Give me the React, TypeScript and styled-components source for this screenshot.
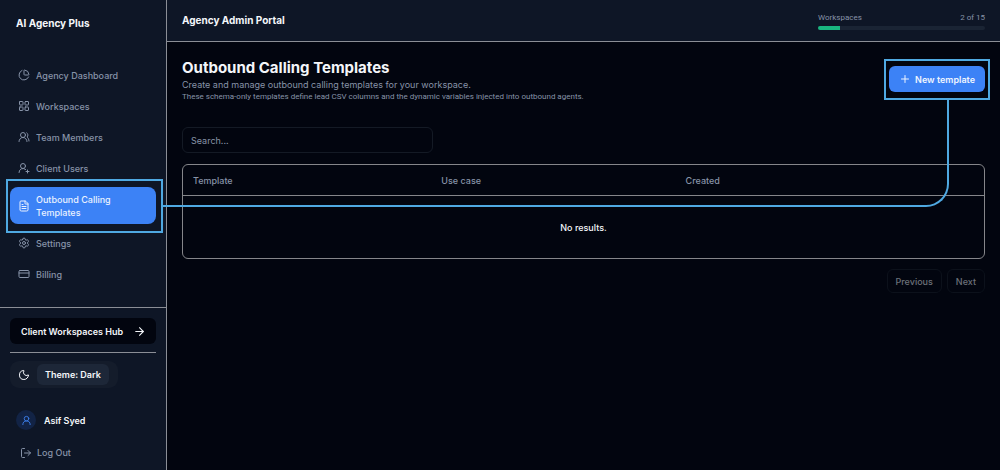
import React from "react";
import styled, { createGlobalStyle, css } from "styled-components";
import {
  ArrowRight,
  ChartPie,
  CreditCard,
  FileText,
  LayoutGrid,
  LogOut,
  Moon,
  Plus,
  Settings,
  UserRound,
  UserRoundPlus,
  UsersRound,
  type LucideIcon,
} from "lucide-react";

const color = {
  page: "#02050f",
  panel: "#0e1626",
  line: "#8b8e96",
  tableLine: "#85868a",
  faint: "#141a25",
  muted: "#8793a8",
  text: "#f4f6fa",
  primary: "#3c82f6",
  highlight: "#4fa9e2",
};

const GlobalStyle = createGlobalStyle`
  *, *::before, *::after { box-sizing: border-box; }
  body {
    margin: 0;
    background: ${color.page};
    color: ${color.text};
    font-family: Inter, "Liberation Sans", sans-serif;
    font-size: 9px;
    line-height: 13px;
  }
  button, input { font: inherit; color: inherit; }
  h1, h2, p { margin: 0; }
`;

const Shell = styled.div`
  display: flex;
  min-height: 100vh;
`;

const Sidebar = styled.aside`
  display: flex;
  flex-direction: column;
  flex: none;
  width: 167px;
  background: ${color.panel};
  border-right: 1px solid ${color.line};
`;

const Brand = styled.div`
  padding: 17px 16px 0;
  font-size: 10px;
  font-weight: 700;
`;

const Nav = styled.nav`
  display: flex;
  flex-direction: column;
  gap: 7px;
  flex: 1;
  padding: 33px 10px 20px;
`;

const highlightBox = css`
  &::after {
    content: "";
    position: absolute;
    border: 2px solid ${color.highlight};
    pointer-events: none;
  }
`;

const NavLink = styled.a<{ $active?: boolean }>`
  position: relative;
  display: flex;
  align-items: center;
  gap: 6px;
  min-height: 24px;
  padding: 0 8px;
  border-radius: 8px;
  color: ${color.muted};
  font-weight: 500;
  text-decoration: none;

  svg { flex: none; }

  ${({ $active }) =>
    $active &&
    css`
      min-height: 37px;
      padding-right: 30px;
      background: ${color.primary};
      color: #e9f1ff;
      ${highlightBox}
      &::after { inset: -8px -7px -9px -4px; }
    `}
`;

const SidebarFooter = styled.div`
  display: flex;
  flex-direction: column;
  align-items: flex-start;
  padding: 10px 10px 11px;
  border-top: 1px solid ${color.line};
`;

const HubLink = styled.a`
  display: flex;
  align-items: center;
  justify-content: space-between;
  align-self: stretch;
  height: 26px;
  padding: 0 10px 0 11px;
  border-radius: 6px;
  background: ${color.page};
  color: ${color.text};
  font-weight: 600;
  text-decoration: none;
`;

const Divider = styled.hr`
  align-self: stretch;
  height: 1px;
  margin: 8px 0;
  border: 0;
  background: ${color.line};
`;

const ThemeButton = styled.button`
  display: flex;
  align-items: center;
  gap: 7px;
  padding: 3px 9px 3px 8px;
  border: 0;
  border-radius: 9px;
  background: #141c2b;
  cursor: pointer;
`;

const ThemeLabel = styled.span`
  padding: 4px 8px;
  border-radius: 6px;
  background: #1d2738;
  font-weight: 600;
`;

const Account = styled.div`
  display: flex;
  align-items: center;
  gap: 8px;
  margin: 22px 0 0 6px;
  font-weight: 600;
`;

const Avatar = styled.span`
  display: grid;
  place-items: center;
  width: 20px;
  height: 20px;
  border-radius: 50%;
  background: #122345;
  color: #3b7de8;
`;

const LogoutButton = styled.button`
  display: flex;
  align-items: center;
  gap: 5px;
  margin-top: 16px;
  padding: 0 10px;
  border: 0;
  background: none;
  color: ${color.muted};
  font-weight: 500;
  cursor: pointer;
`;

const Main = styled.div`
  position: relative;
  flex: 1;
  min-width: 0;
`;

const TopBar = styled.header`
  display: flex;
  align-items: center;
  justify-content: space-between;
  height: 42px;
  padding: 0 15px;
  background: ${color.panel};
  border-bottom: 1px solid ${color.line};
`;

const PortalTitle = styled.h2`
  font-size: 10px;
  font-weight: 700;
`;

const Usage = styled.div`
  width: 167px;
  color: ${color.muted};
  font-family: Roboto, "Liberation Sans", sans-serif;
  font-size: 8px;
  line-height: 12px;
`;

const UsageLabels = styled.div`
  display: flex;
  justify-content: space-between;
  margin-bottom: 2px;
`;

const Track = styled.div`
  height: 4px;
  overflow: hidden;
  border-radius: 2px;
  background: #1a2434;
`;

const Fill = styled.div`
  height: 100%;
  background: #19b57f;
`;

const Content = styled.main`
  padding: 16px 15px;
`;

const PageHead = styled.div`
  display: flex;
  align-items: flex-start;
  justify-content: space-between;
`;

const Title = styled.h1`
  font-size: 15px;
  line-height: 20px;
  font-weight: 700;
`;

const Lead = styled.p`
  color: ${color.muted};
  line-height: 13px;
`;

const Note = styled.p`
  color: ${color.muted};
  font-family: Roboto, "Liberation Sans", sans-serif;
  font-size: 8px;
  line-height: 11px;
`;

const NewButton = styled.button`
  position: relative;
  display: flex;
  align-items: center;
  gap: 4px;
  height: 26px;
  margin-top: 8px;
  padding: 0 10px;
  border: 0;
  border-radius: 6px;
  background: ${color.primary};
  color: #eef4ff;
  font-weight: 600;
  cursor: pointer;
  ${highlightBox}
  &::after { inset: -7px -5px -8px -5px; }
`;

const Search = styled.input`
  display: block;
  width: 251px;
  height: 26px;
  margin: 25px 0 11px;
  padding: 0 8px;
  border: 1px solid ${color.faint};
  border-radius: 6px;
  background: transparent;
  &::placeholder { color: ${color.muted}; opacity: 1; }
`;

const TableFrame = styled.div`
  border: 1px solid ${color.tableLine};
  border-radius: 6px;
`;

const Table = styled.table`
  width: 100%;
  table-layout: fixed;
  border-collapse: separate;
  border-spacing: 0;
`;

const HeadCell = styled.th<{ $width?: string }>`
  width: ${({ $width }) => $width ?? "auto"};
  height: 31px;
  padding: 0 10px;
  border-bottom: 1px solid ${color.tableLine};
  color: ${color.muted};
  font-weight: 500;
  text-align: left;
`;

const EmptyCell = styled.td`
  height: 62px;
  padding: 0 10px;
  font-weight: 500;
  text-align: center;
`;

const Pager = styled.div`
  display: flex;
  justify-content: flex-end;
  gap: 5px;
  margin-top: 10px;
`;

const PagerButton = styled.button`
  height: 24px;
  padding: 0 8px;
  border: 1px solid #0c111b;
  border-radius: 6px;
  background: none;
  color: #6d717a;
  font-weight: 500;
`;

/* Links the highlighted menu entry to the button it leads to. */
const Connector = styled.div`
  position: absolute;
  top: 100px;
  left: -4px;
  right: 51px;
  height: 107px;
  border: solid ${color.highlight};
  border-width: 0 2px 2px 0;
  border-bottom-right-radius: 23px;
  pointer-events: none;
`;

const links: { label: string; icon: LucideIcon; active?: boolean }[] = [
  { label: "Agency Dashboard", icon: ChartPie },
  { label: "Workspaces", icon: LayoutGrid },
  { label: "Team Members", icon: UsersRound },
  { label: "Client Users", icon: UserRoundPlus },
  { label: "Outbound Calling Templates", icon: FileText, active: true },
  { label: "Settings", icon: Settings },
  { label: "Billing", icon: CreditCard },
];

const usage = { used: 2, total: 15 };

export default function App() {
  return (
    <>
      <GlobalStyle />
      <Shell>
        <Sidebar>
          <Brand>AI Agency Plus</Brand>
          <Nav>
            {links.map(({ label, icon: Icon, active }) => (
              <NavLink key={label} href="#" $active={active} aria-current={active ? "page" : undefined}>
                <Icon size={12} />
                {label}
              </NavLink>
            ))}
          </Nav>
          <SidebarFooter>
            <HubLink href="#">
              Client Workspaces Hub
              <ArrowRight size={13} />
            </HubLink>
            <Divider />
            <ThemeButton>
              <Moon size={12} />
              <ThemeLabel>Theme: Dark</ThemeLabel>
            </ThemeButton>
            <Account>
              <Avatar>
                <UserRound size={11} />
              </Avatar>
              Asif Syed
            </Account>
            <LogoutButton>
              <LogOut size={12} />
              Log Out
            </LogoutButton>
          </SidebarFooter>
        </Sidebar>
        <Main>
          <TopBar>
            <PortalTitle>Agency Admin Portal</PortalTitle>
            <Usage>
              <UsageLabels>
                <span>Workspaces</span>
                <span>{usage.used} of {usage.total}</span>
              </UsageLabels>
              <Track>
                <Fill style={{ width: `${(usage.used / usage.total) * 100}%` }} />
              </Track>
            </Usage>
          </TopBar>
          <Content>
            <PageHead>
              <div>
                <Title>Outbound Calling Templates</Title>
                <Lead>Create and manage outbound calling templates for your workspace.</Lead>
                <Note>
                  These schema-only templates define lead CSV columns and the dynamic variables injected into outbound agents.
                </Note>
              </div>
              <NewButton>
                <Plus size={12} />
                New template
              </NewButton>
            </PageHead>
            <Search type="search" aria-label="Search templates" placeholder="Search..." />
            <TableFrame>
              <Table>
                <thead>
                  <tr>
                    <HeadCell $width="31%">Template</HeadCell>
                    <HeadCell $width="30.5%">Use case</HeadCell>
                    <HeadCell>Created</HeadCell>
                  </tr>
                </thead>
                <tbody>
                  <tr>
                    <EmptyCell colSpan={3}>No results.</EmptyCell>
                  </tr>
                </tbody>
              </Table>
            </TableFrame>
            <Pager>
              <PagerButton disabled>Previous</PagerButton>
              <PagerButton disabled>Next</PagerButton>
            </Pager>
          </Content>
          <Connector />
        </Main>
      </Shell>
    </>
  );
}
